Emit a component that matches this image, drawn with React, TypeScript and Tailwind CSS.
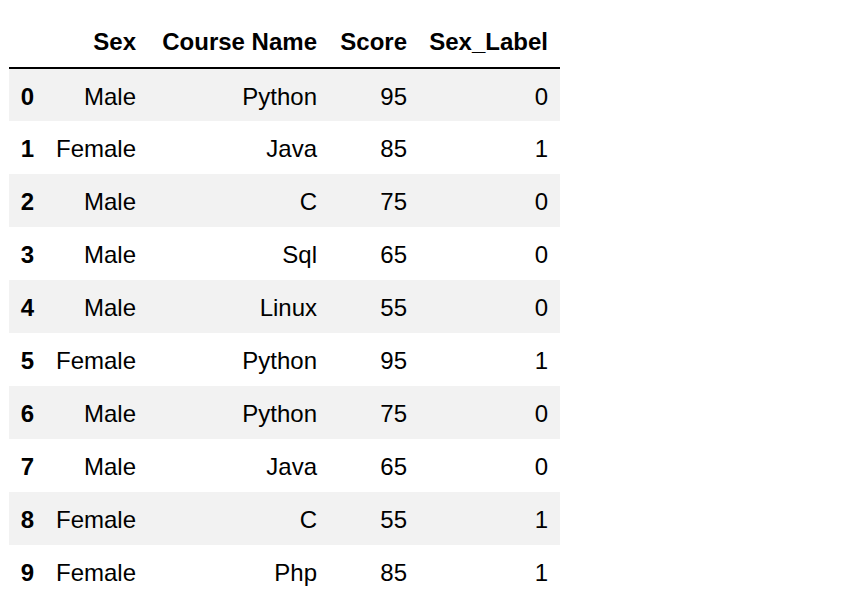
const rows: [string, string, number, number][] = [
  ["Male", "Python", 95, 0],
  ["Female", "Java", 85, 1],
  ["Male", "C", 75, 0],
  ["Male", "Sql", 65, 0],
  ["Male", "Linux", 55, 0],
  ["Female", "Python", 95, 1],
  ["Male", "Python", 75, 0],
  ["Male", "Java", 65, 0],
  ["Female", "C", 55, 1],
  ["Female", "Php", 85, 1],
];

export default function App() {
  return (
    <div className="min-h-screen bg-white pl-[9px] pt-[16px] text-black font-['Liberation_Sans',Arial,sans-serif] text-[24px]">
      <table className="table-fixed border-collapse w-[551px]">
        <colgroup>
          <col className="w-[37px]" />
          <col className="w-[102px]" />
          <col className="w-[181px]" />
          <col className="w-[90px]" />
          <col className="w-[141px]" />
        </colgroup>
        <thead>
          <tr className="h-[52px] border-b-2 border-black">
            <th className="pr-3 text-right font-bold" />
            <th className="pr-3 text-right font-bold">Sex</th>
            <th className="pr-3 text-right font-bold">Course Name</th>
            <th className="pr-3 text-right font-bold">Score</th>
            <th className="pr-3 text-right font-bold">Sex_Label</th>
          </tr>
        </thead>
        <tbody>
          {rows.map((r, i) => (
            <tr key={i} className={i % 2 === 0 ? "h-[53px] bg-[#f2f2f2]" : "h-[53px]"}>
              <th className="pr-3 pt-[3px] text-right font-bold">{i}</th>
              <td className="pr-3 pt-[3px] text-right">{r[0]}</td>
              <td className="pr-3 pt-[3px] text-right">{r[1]}</td>
              <td className="pr-3 pt-[3px] text-right">{r[2]}</td>
              <td className="pr-3 pt-[3px] text-right">{r[3]}</td>
            </tr>
          ))}
        </tbody>
      </table>
    </div>
  );
}
